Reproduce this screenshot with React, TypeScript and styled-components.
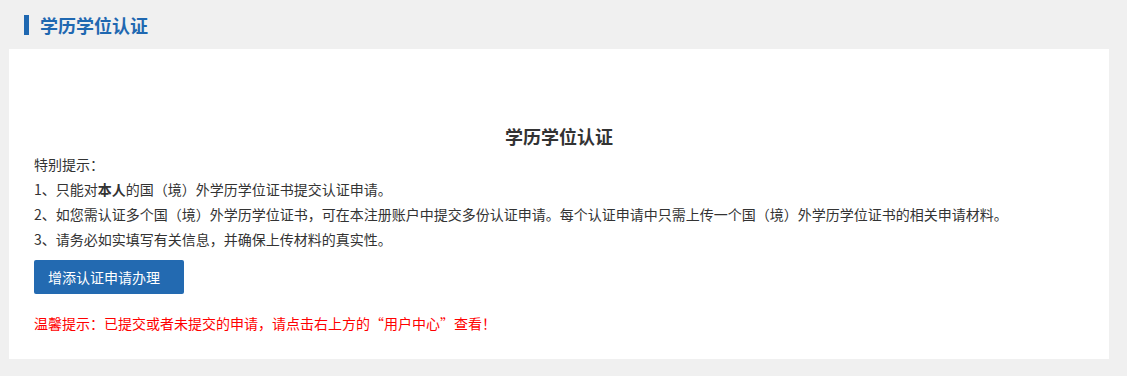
import React from 'react'
import styled, { createGlobalStyle } from 'styled-components'

const GlobalStyle = createGlobalStyle`
    html, body {
        margin: 0;
        padding: 0;
        background: #f0f0f0;
        font-family: "Microsoft YaHei", "Noto Sans CJK SC", "Noto Sans", sans-serif;
    }
`

const Page = styled.div`
    width: 1127px;
    height: 376px;
    background: #f0f0f0;
    overflow: hidden;
`

const Header = styled.div`
    display: flex;
    align-items: center;
    gap: 11px;
    padding: 15px 0 0 24px;
    height: 20px;
    margin-bottom: 14px;
`

const HeaderBar = styled.span`
    display: block;
    width: 5px;
    height: 20px;
    background: #1f68b1;
`

const HeaderTitle = styled.h2`
    margin: 0;
    font-size: 18px;
    font-weight: 700;
    line-height: 20px;
    color: #1f68b1;
`

const Panel = styled.div`
    margin-left: 9px;
    width: 1100px;
    height: 310px;
    box-sizing: border-box;
    background: #fff;
    padding: 72px 25px 0;
`

const PanelTitle = styled.h3`
    margin: 0;
    text-align: center;
    font-size: 18px;
    font-weight: 700;
    line-height: 30px;
    color: #333;
`

const Notice = styled.div`
    margin-top: 1px;
    font-size: 14px;
    line-height: 25px;
    color: #333;

    p {
        margin: 0;
    }

    b {
        font-weight: 700;
    }
`

const AddButton = styled.button`
    display: block;
    margin-top: 8px;
    width: 150px;
    height: 34px;
    padding: 0 0 0 14px;
    border: none;
    border-radius: 2px;
    background: #236ab1;
    color: #fff;
    font-family: inherit;
    font-size: 14px;
    text-align: left;
    cursor: pointer;
`

const Warning = styled.p`
    margin: 17px 0 0;
    font-size: 14px;
    line-height: 25px;
    color: #f00;
`

const notes = [
    '2、如您需认证多个国（境）外学历学位证书，可在本注册账户中提交多份认证申请。每个认证申请中只需上传一个国（境）外学历学位证书的相关申请材料。',
    '3、请务必如实填写有关信息，并确保上传材料的真实性。',
]

const App = () => {
    return (
        <Page>
            <GlobalStyle />
            <Header>
                <HeaderBar />
                <HeaderTitle>学历学位认证</HeaderTitle>
            </Header>
            <Panel>
                <PanelTitle>学历学位认证</PanelTitle>
                <Notice>
                    <p>特别提示：</p>
                    <p>1、只能对<b>本人</b>的国（境）外学历学位证书提交认证申请。</p>
                    {notes.map((note, index) => <p key={index}>{note}</p>)}
                </Notice>
                <AddButton>增添认证申请办理</AddButton>
                <Warning>温馨提示：已提交或者未提交的申请，请点击右上方的“用户中心”查看！</Warning>
            </Panel>
        </Page>
    )
}

export default App
